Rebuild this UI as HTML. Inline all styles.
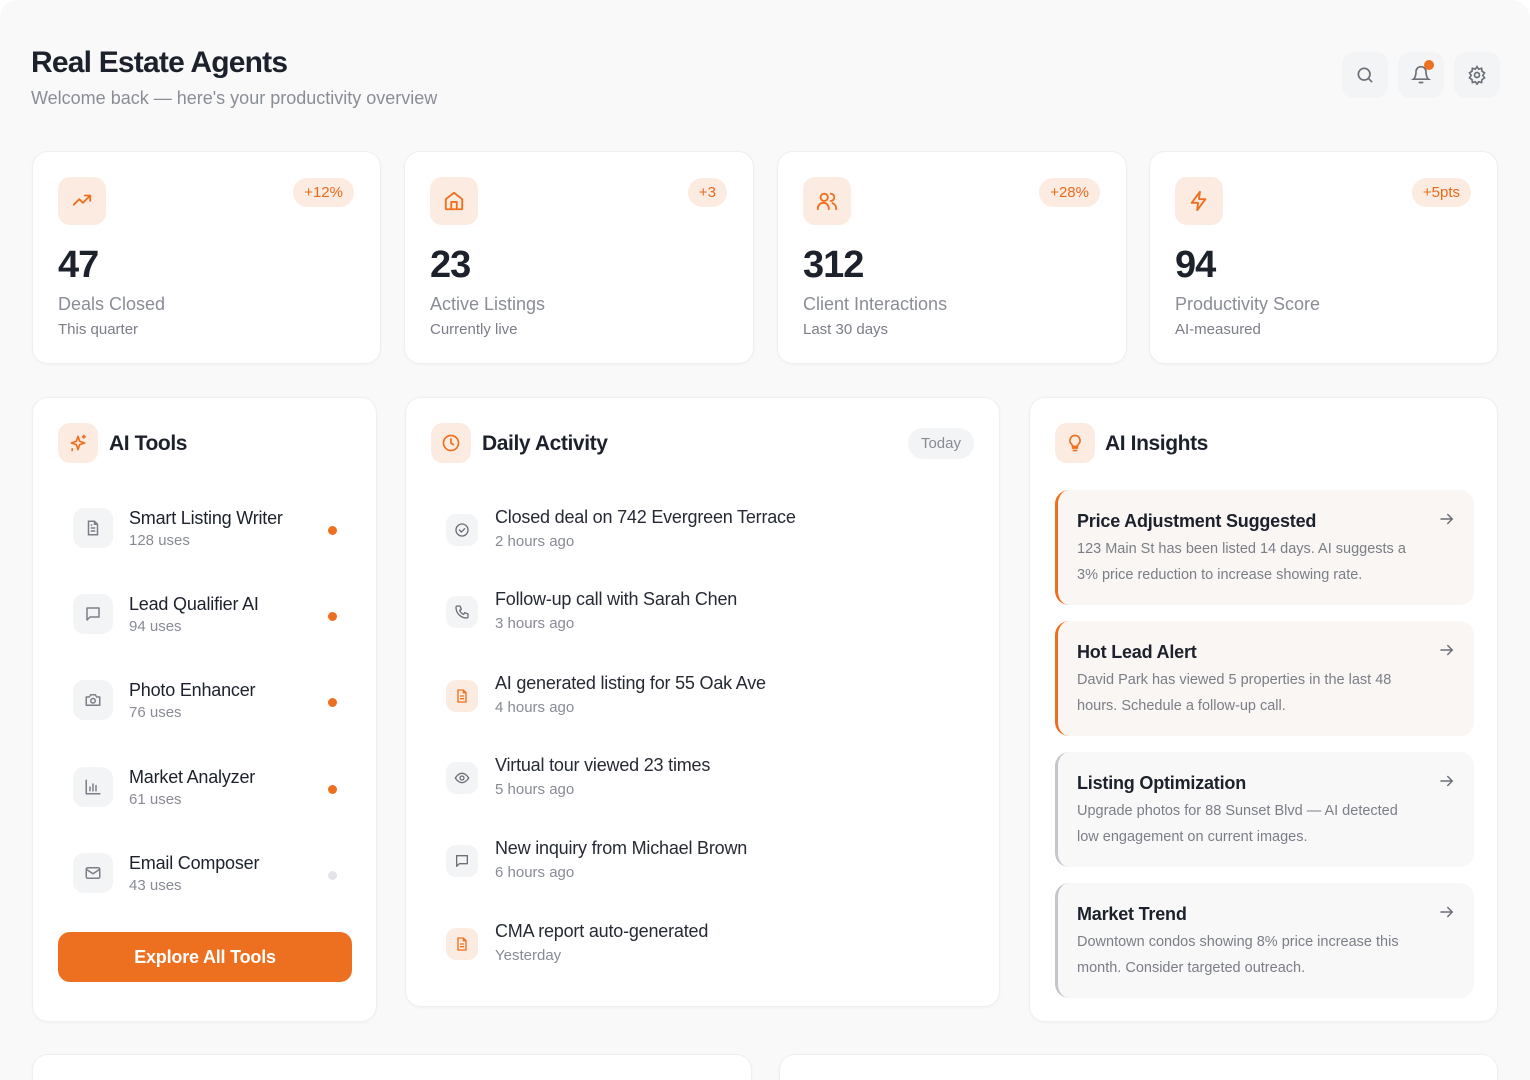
<!DOCTYPE html>
<html><head><meta charset="utf-8"><style>
*{box-sizing:border-box;margin:0;padding:0}
html,body{width:1530px;height:1080px;overflow:hidden}
body{background:#fff;font-family:"Liberation Sans",sans-serif;color:#1f2430;position:relative}
.page{position:absolute;left:0;top:0;width:1530px;height:1080px;background:#f9f9f9;border-radius:18px 18px 0 0;overflow:hidden}
.card{position:absolute;background:#fff;border:1px solid #efefef;border-radius:16px;box-shadow:0 1px 3px rgba(0,0,0,.03)}
.ib{position:absolute;width:48px;height:48px;border-radius:12px;background:#fcebe0;display:flex;align-items:center;justify-content:center}
.badge{position:absolute;top:26px;right:26px;height:29px;padding:0 11px;border-radius:15px;background:#fcebe0;color:#ea6b1f;font-size:15px;line-height:29px}
.num{position:absolute;left:25px;top:92px;font-size:38px;font-weight:700;letter-spacing:-1px;color:#1c212b}
.lbl{position:absolute;left:25px;top:142px;font-size:18px;color:#8a8d96}
.sub{position:absolute;left:25px;top:169px;font-size:15px;color:#7b7e87}
.h{position:absolute;font-size:21px;font-weight:700;letter-spacing:-.4px;color:#1c212b}
.tool{position:absolute;left:40px;width:270px;height:60px}
.tool .ti{position:absolute;left:0;top:8px;width:40px;height:40px;border-radius:11px;background:#f3f4f6;display:flex;align-items:center;justify-content:center}
.tool .tn{position:absolute;left:56px;top:8px;font-size:18px;color:#1c212b;letter-spacing:-.2px}
.tool .tu{position:absolute;left:56px;top:32px;font-size:15px;color:#888b94}
.tool .dot{position:absolute;left:255px;top:26px;width:9px;height:9px;border-radius:50%;background:#ee6f1f}
.act{position:absolute;left:40px;width:520px;height:60px}
.act .ai{position:absolute;left:0;top:8px;width:32px;height:32px;border-radius:10px;background:#f3f4f6;display:flex;align-items:center;justify-content:center}
.act .ai.o{background:#fcebe0}
.act .an{position:absolute;left:49px;top:1px;font-size:18px;color:#262a33;letter-spacing:-.2px}
.act .at{position:absolute;left:49px;top:27px;font-size:15px;color:#888b94}
.ins{position:absolute;left:25px;width:419px;height:115px;border-radius:14px;background:#f9f6f3;border-left:3px solid #ee6f1f}
.ins.g{background:#f8f8f8;border-left-color:#c4c6cb}
.ins .it{position:absolute;left:19px;top:21px;font-size:18px;font-weight:700;color:#1c212b;letter-spacing:-.2px}
.ins .id{position:absolute;left:19px;top:47px;width:345px;font-size:14.5px;line-height:25.5px;color:#7b7e87}
.ins .arr{position:absolute;right:18px;top:20px}
.hb{position:absolute;top:52px;width:46px;height:46px;border-radius:12px;background:#f3f4f6;display:flex;align-items:center;justify-content:center}
svg{display:block}
</style></head><body><div class="page">
<div style="position:absolute;left:31px;top:46px;font-size:30px;font-weight:700;letter-spacing:-.8px;color:#1c212b">Real Estate Agents</div>
<div style="position:absolute;left:31px;top:88px;font-size:18px;color:#8a8d96">Welcome back — here's your productivity overview</div>
<div class="hb" style="left:1342px"><svg width="20" height="20" viewBox="0 0 24 24" fill="none" stroke="#6b6f78" stroke-width="2" stroke-linecap="round"><circle cx="11" cy="11" r="7"/><path d="M20 20l-4-4"/></svg></div>
<div class="hb" style="left:1398px"><svg width="20" height="20" viewBox="0 0 24 24" fill="none" stroke="#6b6f78" stroke-width="2" stroke-linecap="round"><path d="M6 8a6 6 0 0112 0c0 7 3 9 3 9H3s3-2 3-9M10 21h4"/></svg><div style="position:absolute;right:10px;top:8px;width:10px;height:10px;border-radius:50%;background:#ee6f1f"></div></div>
<div class="hb" style="left:1454px"><svg width="20" height="20" viewBox="0 0 24 24" fill="none" stroke="#6b6f78" stroke-width="2"><circle cx="12" cy="12" r="3"/><path d="M12 2l2 3 3.5-1 .5 3.5 3 2-2 3 2 3-3 2-.5 3.5-3.5-1-2 3-2-3-3.5 1-.5-3.5-3-2 2-3-2-3 3-2 .5-3.5 3.5 1z"/></svg></div>

<div class="card" style="left:32px;top:151px;width:349px;height:213px"><div class="ib" style="left:25px;top:25px"><svg width="22" height="22" viewBox="0 0 24 24" fill="none" stroke="#ee6f1f" stroke-width="2" stroke-linecap="round" stroke-linejoin="round"><path d="M3 16l6-6 4 4 8-8M15 6h6v6"/></svg></div><div class="badge">+12%</div><div class="num">47</div><div class="lbl">Deals Closed</div><div class="sub">This quarter</div></div>
<div class="card" style="left:404px;top:151px;width:350px;height:213px"><div class="ib" style="left:25px;top:25px"><svg width="22" height="22" viewBox="0 0 24 24" fill="none" stroke="#ee6f1f" stroke-width="2" stroke-linejoin="round"><path d="M3 10l9-7 9 7v10a1 1 0 01-1 1H4a1 1 0 01-1-1zM9 21v-8h6v8"/></svg></div><div class="badge">+3</div><div class="num">23</div><div class="lbl">Active Listings</div><div class="sub">Currently live</div></div>
<div class="card" style="left:777px;top:151px;width:350px;height:213px"><div class="ib" style="left:25px;top:25px"><svg width="22" height="22" viewBox="0 0 24 24" fill="none" stroke="#ee6f1f" stroke-width="2" stroke-linecap="round"><circle cx="9" cy="8" r="4"/><path d="M2 21v-1a6 6 0 0112 0v1M16 4a4 4 0 010 8M22 21v-1a6 6 0 00-4-5.6"/></svg></div><div class="badge">+28%</div><div class="num">312</div><div class="lbl">Client Interactions</div><div class="sub">Last 30 days</div></div>
<div class="card" style="left:1149px;top:151px;width:349px;height:213px"><div class="ib" style="left:25px;top:25px"><svg width="22" height="22" viewBox="0 0 24 24" fill="none" stroke="#ee6f1f" stroke-width="2" stroke-linejoin="round"><path d="M13 2L4 14h7l-1 8 9-12h-7z"/></svg></div><div class="badge">+5pts</div><div class="num">94</div><div class="lbl">Productivity Score</div><div class="sub">AI-measured</div></div>

<div class="card" style="left:32px;top:397px;width:345px;height:625px">
<div class="ib" style="left:25px;top:25px;width:40px;height:40px"><svg width="20" height="20" viewBox="0 0 24 24" fill="none" stroke="#ee6f1f" stroke-width="2" stroke-linejoin="round"><path d="M12 4l2 6 6 2-6 2-2 6-2-6-6-2 6-2z"/><path d="M19 3v3M17.5 4.5h3M5 19v2" stroke-linecap="round"/></svg></div>
<div class="h" style="left:76px;top:34px">AI Tools</div>
<div class="tool" style="top:102px"><div class="ti"><svg width="18" height="18" viewBox="0 0 24 24" fill="none" stroke="#7b7e87" stroke-width="2"><path d="M14 3H6v18h12V7zM14 3v4h4M9 12h6M9 16h6M9 8h2"/></svg></div><div class="tn">Smart Listing Writer</div><div class="tu">128 uses</div><div class="dot"></div></div>
<div class="tool" style="top:188px"><div class="ti"><svg width="18" height="18" viewBox="0 0 24 24" fill="none" stroke="#7b7e87" stroke-width="2" stroke-linejoin="round"><path d="M4 4h16v12H8l-4 4z"/></svg></div><div class="tn">Lead Qualifier AI</div><div class="tu">94 uses</div><div class="dot"></div></div>
<div class="tool" style="top:274px"><div class="ti"><svg width="18" height="18" viewBox="0 0 24 24" fill="none" stroke="#7b7e87" stroke-width="2" stroke-linejoin="round"><path d="M3 8h4l2-3h6l2 3h4v11H3z"/><circle cx="12" cy="13" r="3"/></svg></div><div class="tn">Photo Enhancer</div><div class="tu">76 uses</div><div class="dot"></div></div>
<div class="tool" style="top:361px"><div class="ti"><svg width="18" height="18" viewBox="0 0 24 24" fill="none" stroke="#7b7e87" stroke-width="2" stroke-linecap="round"><path d="M3 3v18h18M8 17v-5M12 17V8M16 17v-7"/></svg></div><div class="tn">Market Analyzer</div><div class="tu">61 uses</div><div class="dot"></div></div>
<div class="tool" style="top:447px"><div class="ti"><svg width="18" height="18" viewBox="0 0 24 24" fill="none" stroke="#7b7e87" stroke-width="2" stroke-linejoin="round"><rect x="3" y="5" width="18" height="14" rx="2"/><path d="M3 7l9 6 9-6"/></svg></div><div class="tn">Email Composer</div><div class="tu">43 uses</div><div class="dot" style="background:#e3e4e7"></div></div>
<div style="position:absolute;left:25px;top:534px;width:294px;height:50px;border-radius:12px;background:#ec7020;color:#fff;font-size:18px;font-weight:700;text-align:center;line-height:50px;letter-spacing:-.2px">Explore All Tools</div>
</div>

<div class="card" style="left:405px;top:397px;width:595px;height:610px">
<div class="ib" style="left:25px;top:25px;width:40px;height:40px"><svg width="20" height="20" viewBox="0 0 24 24" fill="none" stroke="#ee6f1f" stroke-width="2" stroke-linecap="round"><circle cx="12" cy="12" r="9"/><path d="M12 7v5l3 2"/></svg></div>
<div class="h" style="left:76px;top:34px">Daily Activity</div>
<div style="position:absolute;right:25px;top:30px;height:31px;padding:0 13px;border-radius:16px;background:#f3f4f6;color:#888b94;font-size:15px;line-height:31px">Today</div>
<div class="act" style="top:108px"><div class="ai"><svg width="16" height="16" viewBox="0 0 24 24" fill="none" stroke="#6b6f78" stroke-width="2" stroke-linecap="round"><circle cx="12" cy="12" r="9"/><path d="M8 12l3 3 5-5"/></svg></div><div class="an">Closed deal on 742 Evergreen Terrace</div><div class="at">2 hours ago</div></div>
<div class="act" style="top:190px"><div class="ai"><svg width="16" height="16" viewBox="0 0 24 24" fill="none" stroke="#6b6f78" stroke-width="2" stroke-linejoin="round"><path d="M5 3h4l2 5-2.5 1.5a11 11 0 006 6L16 13l5 2v4a2 2 0 01-2 2A16 16 0 013 5a2 2 0 012-2z"/></svg></div><div class="an">Follow-up call with Sarah Chen</div><div class="at">3 hours ago</div></div>
<div class="act" style="top:274px"><div class="ai o"><svg width="16" height="16" viewBox="0 0 24 24" fill="none" stroke="#ee6f1f" stroke-width="2"><path d="M14 3H6v18h12V7zM14 3v4h4M9 12h6M9 16h6"/></svg></div><div class="an">AI generated listing for 55 Oak Ave</div><div class="at">4 hours ago</div></div>
<div class="act" style="top:356px"><div class="ai"><svg width="16" height="16" viewBox="0 0 24 24" fill="none" stroke="#6b6f78" stroke-width="2"><path d="M2 12s4-7 10-7 10 7 10 7-4 7-10 7S2 12 2 12z"/><circle cx="12" cy="12" r="3"/></svg></div><div class="an">Virtual tour viewed 23 times</div><div class="at">5 hours ago</div></div>
<div class="act" style="top:439px"><div class="ai"><svg width="16" height="16" viewBox="0 0 24 24" fill="none" stroke="#6b6f78" stroke-width="2" stroke-linejoin="round"><path d="M4 4h16v12H8l-4 4z"/></svg></div><div class="an">New inquiry from Michael Brown</div><div class="at">6 hours ago</div></div>
<div class="act" style="top:522px"><div class="ai o"><svg width="16" height="16" viewBox="0 0 24 24" fill="none" stroke="#ee6f1f" stroke-width="2"><path d="M14 3H6v18h12V7zM14 3v4h4M9 12h6M9 16h6"/></svg></div><div class="an">CMA report auto-generated</div><div class="at">Yesterday</div></div>
</div>

<div class="card" style="left:1029px;top:397px;width:469px;height:625px">
<div class="ib" style="left:25px;top:25px;width:40px;height:40px"><svg width="20" height="20" viewBox="0 0 24 24" fill="none" stroke="#ee6f1f" stroke-width="2" stroke-linecap="round"><path d="M9 18h6M10 21h4M12 3a6 6 0 00-4 10.5c.8.8 1 1.5 1 2.5h6c0-1 .2-1.7 1-2.5A6 6 0 0012 3z"/></svg></div>
<div class="h" style="left:75px;top:34px">AI Insights</div>
<div class="ins" style="top:92px"><div class="it">Price Adjustment Suggested</div><div class="id">123 Main St has been listed 14 days. AI suggests a 3% price reduction to increase showing rate.</div><svg class="arr" width="18" height="18" viewBox="0 0 24 24" fill="none" stroke="#6b6f78" stroke-width="2" stroke-linecap="round"><path d="M4 12h15M13 6l6 6-6 6"/></svg></div>
<div class="ins" style="top:223px"><div class="it">Hot Lead Alert</div><div class="id">David Park has viewed 5 properties in the last 48 hours. Schedule a follow-up call.</div><svg class="arr" width="18" height="18" viewBox="0 0 24 24" fill="none" stroke="#6b6f78" stroke-width="2" stroke-linecap="round"><path d="M4 12h15M13 6l6 6-6 6"/></svg></div>
<div class="ins g" style="top:354px"><div class="it">Listing Optimization</div><div class="id">Upgrade photos for 88 Sunset Blvd — AI detected low engagement on current images.</div><svg class="arr" width="18" height="18" viewBox="0 0 24 24" fill="none" stroke="#6b6f78" stroke-width="2" stroke-linecap="round"><path d="M4 12h15M13 6l6 6-6 6"/></svg></div>
<div class="ins g" style="top:485px"><div class="it">Market Trend</div><div class="id">Downtown condos showing 8% price increase this month. Consider targeted outreach.</div><svg class="arr" width="18" height="18" viewBox="0 0 24 24" fill="none" stroke="#6b6f78" stroke-width="2" stroke-linecap="round"><path d="M4 12h15M13 6l6 6-6 6"/></svg></div>
</div>

<div class="card" style="left:32px;top:1054px;width:720px;height:60px"></div>
<div class="card" style="left:779px;top:1054px;width:719px;height:60px"></div>
</div></body></html>
